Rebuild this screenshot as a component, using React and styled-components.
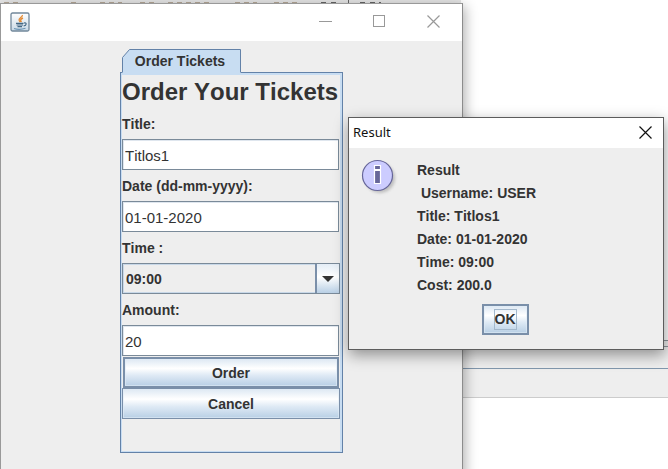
import React from "react";
import styled, { createGlobalStyle } from "styled-components";

const Global = createGlobalStyle`
  * { box-sizing: border-box; }
  html, body, #root { height: 100%; margin: 0; }
  body { background: #fff; overflow: hidden; }
  body, button, input, select {
    font-family: "Liberation Sans", Arial, sans-serif;
    font-size: 14px;
    font-kerning: none;
    color: #333;
  }
`;

const Desktop = styled.main`
  position: relative;
  height: 100%;
  overflow: hidden;
  display: grid;
  grid-template-rows: 3px 338px 6px 22px 29px 1fr;
`;

const Strip = styled.div`
  background: ${(p) => p.$bg};
  border-bottom: ${(p) => (p.$line ? `1px solid ${p.$line}` : "none")};
`;

const CodeStrip = styled.div`
  width: 69%;
  background: #e6e6e6;
  overflow: hidden;
  svg { display: block; }
`;

const Window = styled.section`
  position: absolute;
  top: 3px;
  left: 0;
  bottom: -10px;
  width: 463px;
  display: flex;
  flex-direction: column;
  border: 1px solid #999;
  border-right-color: #8c8c8c;
  background: #eee;
  box-shadow: 2px 3px 12px rgba(0, 0, 0, 0.32);
`;

const TitleBar = styled.header`
  display: flex;
  align-items: center;
  justify-content: space-between;
  height: 37px;
  padding: 0 12px 2px 9px;
  background: #fff;
`;

const WindowButtons = styled.div`
  display: flex;
  gap: 20px;
`;

const IconButton = styled.button`
  display: grid;
  place-items: center;
  width: 34px;
  height: 26px;
  padding: 0;
  border: 0;
  background: transparent;
  svg { display: block; }
`;

const TabbedPane = styled.div`
  display: flex;
  flex-direction: column;
  align-items: flex-start;
  align-self: center;
  width: 223px;
  margin-top: 8px;
`;

const Tab = styled.button`
  position: relative;
  width: 120px;
  height: 24px;
  margin: 0 0 -1px 1px;
  padding: 0 2px 0 0;
  border: 0;
  background: transparent;
  font-weight: bold;
  line-height: 23px;
  z-index: 1;
  svg { position: absolute; inset: 0; }
  span { position: relative; }
`;

const Panel = styled.form`
  display: flex;
  flex-direction: column;
  align-self: stretch;
  height: 381px;
  padding: 3px 2px 0 1px;
  border: 1px solid #6382a8;
  box-shadow: inset 0 2px #c8ddf2, inset 1px 0 #c8ddf2, inset -2px 0 #c8ddf2, inset 0 -1px #c8ddf2;
`;

const Heading = styled.h1`
  margin: 0;
  font-size: 24px;
  line-height: 32px;
  white-space: nowrap;
`;

const Label = styled.label`
  padding-top: 2px;
  font-weight: bold;
  line-height: 29px;
`;

const TextField = styled.input`
  width: calc(100% - 1px);
  height: 31px;
  padding: 1px 2px 0;
  border: 1px solid #7a8a99;
  border-radius: 0;
  box-shadow: inset 1px 1px #dfe6ee;
  background: #fff;
  font-size: 15px;
  outline: 0;
`;

const SelectBox = styled.div`
  display: grid;
  grid-template-columns: 1fr 24px;
  height: 31px;
  border: 1px solid #7a8a99;
  box-shadow: inset 0 0 0 1px #c8d8e8;
  select {
    grid-area: 1 / 1 / 2 / 3;
    min-width: 0;
    padding: 0 3px;
    border: 0;
    background: transparent;
    appearance: none;
    font-weight: bold;
    outline: 0;
  }
`;

const Arrow = styled.span`
  grid-area: 1 / 2;
  display: grid;
  place-items: center;
  border-left: 2px solid #7a8fa9;
  background: linear-gradient(#e4edf6, #fff 45%, #b8cfe5);
  pointer-events: none;
`;

const MetalButton = styled.button`
  height: 31px;
  padding: 0;
  border: ${(p) => (p.$primary ? 2 : 1)}px solid #7a8fa9;
  border-radius: 0;
  background: linear-gradient(#dde8f3, #fff 35%, #dfeaf5 60%, #b8cfe5);
  box-shadow: inset 0 0 0 1px rgba(225, 236, 247, 0.6);
  font-weight: bold;
  margin: ${(p) => (p.$primary ? "1px 1px 0" : "0")};
`;

const Dialog = styled.section`
  position: absolute;
  top: 117px;
  left: 348px;
  width: 316px;
  border: 1px solid #5c5c5c;
  background: #eee;
  box-shadow: 1px 5px 14px rgba(0, 0, 0, 0.4);
`;

const DialogTitle = styled.header`
  display: flex;
  align-items: center;
  justify-content: space-between;
  height: 30px;
  padding: 0 1px 2px 4px;
  background: #fff;
  color: #111;
  h2 {
    margin: 0;
    font: 13px "Noto Sans", sans-serif;
  }
`;

const Message = styled.div`
  display: flex;
  gap: 18px;
  padding: 11px 12px 0 12px;
  svg { flex: none; }
`;

const Lines = styled.div`
  font-weight: bold;
  line-height: 23px;
  white-space: pre;
`;

const Actions = styled.footer`
  display: flex;
  justify-content: center;
  padding: 7px 2px 14px 0;
`;

const OkButton = styled(MetalButton)`
  width: 47px;
  margin: 0;
  span {
    display: inline-block;
    padding: 1px 0;
    border: 1px solid #a3b8cc;
    line-height: 17px;
  }
`;

const Cross = ({ size, color }) => (
  <svg width={size} height={size} viewBox="0 0 13 13" fill="none" stroke={color} strokeWidth="1.2">
    <path d="M.5.5l12 12M12.5.5l-12 12" />
  </svg>
);

const JavaIcon = () => (
  <svg width="20" height="20" viewBox="0 0 20 20" fill="none" aria-label="Java" role="img">
    <defs>
      <linearGradient id="java" x2="0" y2="1">
        <stop stopColor="#fff" />
        <stop offset="1" stopColor="#c9d9e6" />
      </linearGradient>
    </defs>
    <rect x="1" y="1" width="18" height="18" rx="1.5" fill="url(#java)" stroke="#71889b" strokeWidth="1.3" />
    <path d="M12.4 3C13 5.200 8 6 9.200 8.300L10.300 10M13 6c-2.500 1-3 2-1.500 4" stroke="#e58a32" strokeWidth="1.4" />
    <path d="M6 11.300h7.500M6.500 13h6.500M7.500 14.600h4.500M14 11c3-.8 2.800 2.500-.3 2.900" stroke="#456985" strokeWidth="1.2" />
    <path d="M4 16.500c3 1 8 .9 11.500-.2" stroke="#6c95b5" strokeWidth="1.2" />
  </svg>
);

const InfoIcon = () => (
  <svg width="38" height="38" viewBox="0 0 38 38" aria-label="Information" role="img">
    <defs>
      <filter id="soft" x="-20%" y="-20%" width="150%" height="150%">
        <feGaussianBlur stdDeviation="1.5" />
      </filter>
    </defs>
    <circle cx="19" cy="19" r="15" fill="#aaa" opacity=".7" filter="url(#soft)" />
    <circle cx="16.500" cy="16.500" r="15" fill="#ccf" stroke="#666699" strokeWidth="1.2" />
    <path d="M13.500 6.500h6v4h-6zM13.500 11.500h6v13h-6z" fill="#666699" stroke="#fff" strokeWidth="1.2" />
  </svg>
);

const Field = ({ id, label, value }) => (
  <>
    <Label htmlFor={id}>{label}</Label>
    <TextField id={id} defaultValue={value} />
  </>
);

export default function App() {
  return (
    <Desktop>
      <Global />
      <CodeStrip>
        <svg width="460" height="3">
          <path
            d="M4 2.500h18M71 2.500h6M100 2.500h22M140 2.500h14M168 2.500h42M235 2.500h22M274 2.500h24"
            stroke="#b5a898"
            strokeDasharray="5 4"
          />
          <path d="M321 2.500h5M331 2.500h5M348.500 0v3M360 2.500h5M370 2.500h5M379 2.500h2" stroke="#666" />
        </svg>
      </CodeStrip>
      <Strip $bg="#fff" $line="#8d949b" />
      <Strip $bg="#eee" $line="#8d949b" />
      <Strip $bg="#eee" $line="#8197ad" />
      <Strip $bg="#eee" $line="#ccc" />
      <Strip $bg="#fff" />

      <Window aria-label="Order window">
        <TitleBar>
          <JavaIcon />
          <WindowButtons>
            <IconButton type="button" aria-label="Minimize">
              <svg width="13" height="13"><path d="M0 6.500h13" stroke="#999" /></svg>
            </IconButton>
            <IconButton type="button" aria-label="Maximize">
              <svg width="13" height="13"><rect x=".5" y=".5" width="11" height="11" fill="none" stroke="#999" /></svg>
            </IconButton>
            <IconButton type="button" aria-label="Close">
              <Cross size={13} color="#999" />
            </IconButton>
          </WindowButtons>
        </TitleBar>
        <TabbedPane>
          <Tab type="button">
            <svg width="120" height="24">
              <path d="M1.500 24V8.500L8.500.5h111V24z" fill="#c8ddf2" />
              <path d="M1.500 23V8.500L8.500.5h111V23" fill="none" stroke="#6382a8" />
            </svg>
            <span>Order Tickets</span>
          </Tab>
          <Panel onSubmit={(e) => e.preventDefault()}>
            <Heading>Order Your Tickets</Heading>
            <Field id="title" label="Title:" value="Titlos1" />
            <Field id="date" label="Date (dd-mm-yyyy):" value="01-01-2020" />
            <Label htmlFor="time">Time :</Label>
            <SelectBox>
              <select id="time" defaultValue="09:00">
                <option>09:00</option>
              </select>
              <Arrow>
                <svg width="12" height="6"><path d="M0 0h12L6 6z" fill="#333" /></svg>
              </Arrow>
            </SelectBox>
            <Field id="amount" label="Amount:" value="20" />
            <MetalButton type="submit" $primary>Order</MetalButton>
            <MetalButton type="button">Cancel</MetalButton>
          </Panel>
        </TabbedPane>
      </Window>

      <Dialog role="dialog" aria-labelledby="dialog-title">
        <DialogTitle>
          <h2 id="dialog-title">Result</h2>
          <IconButton type="button" aria-label="Close dialog">
            <Cross size={13} color="#111" />
          </IconButton>
        </DialogTitle>
        <Message>
          <InfoIcon />
          <Lines>
            <div>Result</div>
            <div>{" Username: USER"}</div>
            <div>Title: Titlos1</div>
            <div>Date: 01-01-2020</div>
            <div>Time: 09:00</div>
            <div>Cost: 200.0</div>
          </Lines>
        </Message>
        <Actions>
          <OkButton type="button" $primary><span>OK</span></OkButton>
        </Actions>
      </Dialog>
    </Desktop>
  );
}
